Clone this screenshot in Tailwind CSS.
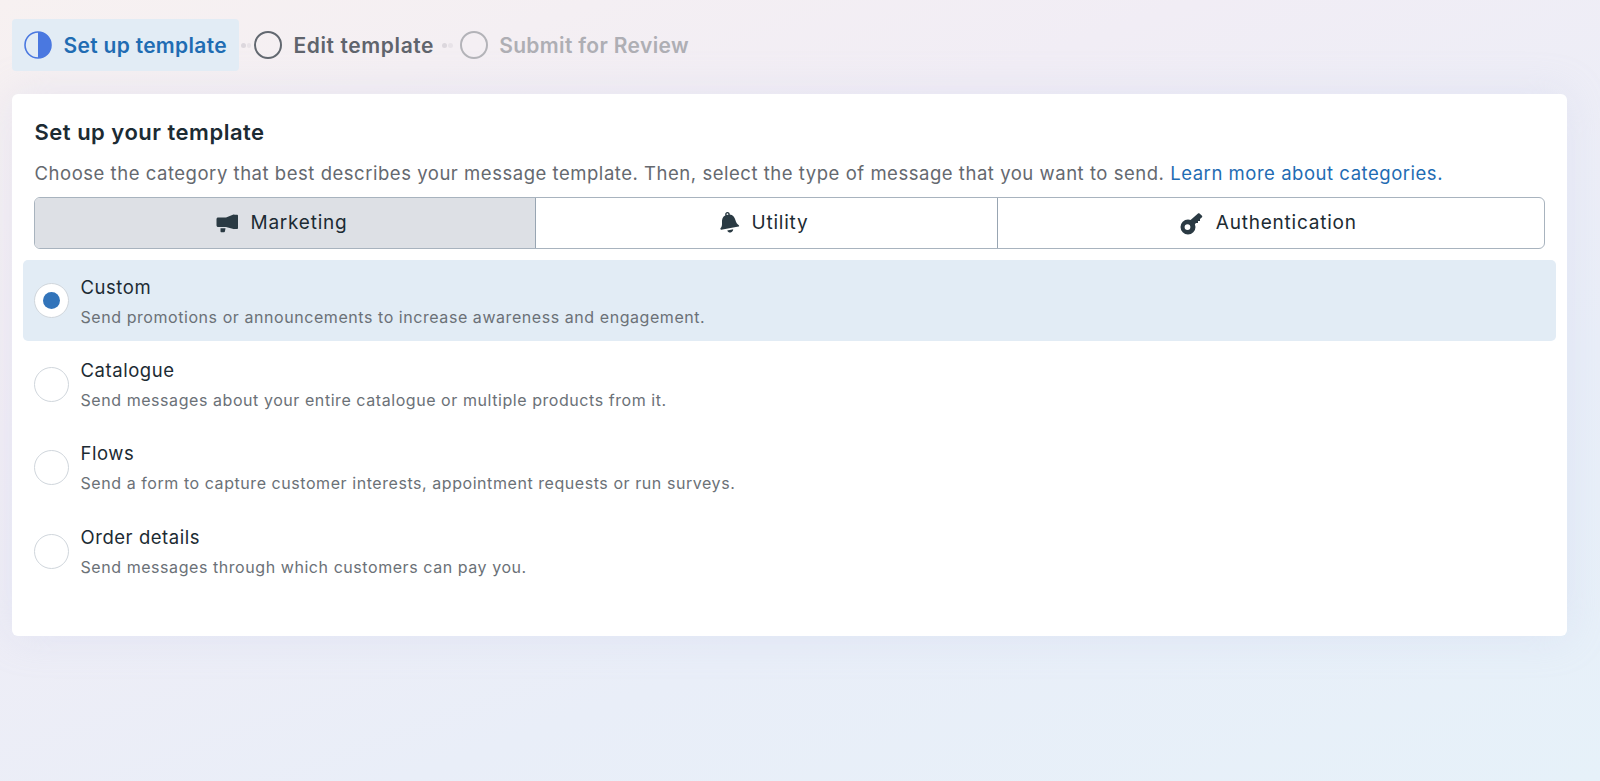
<!DOCTYPE html>
<html lang="en">
<head>
  <meta charset="UTF-8" />
  <meta name="viewport" content="width=device-width, initial-scale=1.0" />
  <title>Set up template</title>
  <script src="https://cdn.jsdelivr.net/npm/@tailwindcss/browser@4"></script>
</head>
<body class="h-[781px] w-[1600px] overflow-hidden bg-[linear-gradient(160deg,#f7f1f1_0%,#f1edf5_32%,#e9eef8_68%,#e6f1f9_100%)] font-['Inter',sans-serif] text-[#1c2b33]">

  <!-- stepper -->
  <div class="flex h-[94px] items-start pl-[11.5px] pt-[19px]">
    <div class="flex h-[52px] w-[227px] items-center gap-[12px] rounded-[4px] bg-[#e2ecf5] pl-[12px]">
      <svg class="h-[28px] w-[28px]" viewBox="0 0 28 28">
        <circle cx="14" cy="14" r="13" fill="none" stroke="#4a78e0" stroke-width="1.6" />
        <path d="M14 1a13 13 0 0 1 0 26z" fill="#4a78e0" />
      </svg>
      <span class="mt-[2px] text-[21px] font-semibold tracking-[0.3px] text-[#1f6cb3]">Set up template</span>
    </div>
    <div class="flex h-[52px] items-center gap-[1px] pl-[2.5px] pr-[2.5px]">
      <span class="h-[5px] w-[5px] rounded-full bg-[#dcd7dd]"></span>
      <span class="h-[5px] w-[4px] rounded-full bg-[#e8e3e8]"></span>
    </div>
    <div class="flex h-[52px] items-center gap-[12px]">
      <span class="h-[28px] w-[28px] rounded-full border-[2.5px] border-[#626870]"></span>
      <span class="mt-[2px] text-[21px] font-semibold tracking-[0.6px] text-[#5f646c]">Edit template</span>
    </div>
    <div class="flex h-[52px] items-center gap-[1px] pl-[8px] pr-[7px]">
      <span class="h-[5px] w-[5px] rounded-full bg-[#dcd7dd]"></span>
      <span class="h-[5px] w-[5px] rounded-full bg-[#e8e3e8]"></span>
    </div>
    <div class="flex h-[52px] items-center gap-[11px]">
      <span class="h-[28px] w-[28px] rounded-full border-[2.5px] border-[#b3b3b8]"></span>
      <span class="mt-[2px] text-[21px] font-semibold tracking-[0.35px] text-[#aeaeb4]">Submit for Review</span>
    </div>
  </div>

  <!-- card -->
  <div class="ml-[11.5px] h-[542px] w-[1555.5px] rounded-[6px] bg-white pl-[11.5px] pr-[11px] pt-[25px] shadow-[0_0_40px_rgba(190,200,235,0.25)]">
    <h1 class="ml-[11.5px] text-[22px] leading-[26px] font-semibold tracking-[0.5px] text-[#1c2b33]">Set up your template</h1>
    <p class="ml-[11.5px] mt-[16px] text-[18.5px] leading-[24px] tracking-[0.53px] text-[#65696f]">Choose the category that best describes your message template. Then, select the type of message that you want to send. <span class="text-[#1f6cb3]">Learn more about categories.</span></p>

    <!-- category tabs -->
    <div class="ml-[11px] mr-[11.5px] mt-[12px] grid h-[52px] grid-cols-[500px_462px_1fr] rounded-[6px] border border-[#a8b3be] text-[19px] tracking-[0.78px] text-[#1c2b33]">
      <div class="flex items-center justify-center gap-[12px] rounded-l-[5px] bg-[#dde0e5] pr-[6px]">
        <svg class="h-[22px] w-[22px]" viewBox="0 -2 22 22" fill="#2a3a43">
          <path d="M.5 5.200c0-1 .7-1.700 1.800-1.700H10L17.500.6c.4-.2.8-.1 1 .1H21c.5 0 1 .4 1 1v12.400c0 .6-.5 1-1 1h-2.500c-.3.2-.7.2-1 0L10 13H2.300c-1.100 0-1.800-.7-1.800-1.800z" />
          <path d="M4.500 14.200h5l-.6 3.300c-.1.5-.4.7-.9.7H5.500c-.6 0-1-.4-1-1z" />
        </svg>
        <span>Marketing</span>
      </div>
      <div class="flex items-center justify-center gap-[12px] border-l border-[#98a5b2] pr-[7px]">
        <svg class="h-[24px] w-[22px]" viewBox="0 0 22 24" fill="#2a3a43">
          <g transform="rotate(-10 11 12)">
            <path fill-rule="evenodd" d="M11 .8a2.300 2.300 0 0 1 2.200 3c3 .9 4.300 3.500 4.600 6.400.3 2.700 1 4.400 2.500 5.600.5.5.2 1.400-.5 1.400H2.200c-.7 0-1-.9-.5-1.400 1.500-1.200 2.200-2.900 2.500-5.600.3-2.900 1.600-5.500 4.600-6.400a2.300 2.300 0 0 1 2.200-3zm0 1.300a1 1 0 0 0-.7 1.600h1.400A1 1 0 0 0 11 2.100z" />
            <path d="M8 19h6c-.3 1.600-1.500 2.600-3 2.600S8.300 20.600 8 19z" />
          </g>
        </svg>
        <span>Utility</span>
      </div>
      <div class="flex items-center justify-center gap-[12px] border-l border-[#98a5b2] pr-[5px]">
        <svg class="h-[24px] w-[24px]" viewBox="0 0 24 24" fill="#2a3a43">
          <path fill-rule="evenodd" d="M8 8.500a7.500 7.500 0 1 1 0 15 7.500 7.500 0 0 1 0-15zm-.5 4.700a2.900 2.900 0 1 0 0 5.800 2.900 2.900 0 0 0 0-5.800z" />
          <path d="M10 9.500 18 2.500c.5-.4 1.100-.4 1.500 0l2.500 2.300c.4.400.4 1 0 1.400l-2 1.800v2h-2v2h-2l-2.500 2.500z" />
        </svg>
        <span>Authentication</span>
      </div>
    </div>

    <!-- message types -->
    <div class="mt-[11px] flex flex-col gap-[2.2px]">
      <div class="flex h-[81px] items-start rounded-[5px] bg-[#e2ecf5] pl-[11px] pt-[15px]">
        <span class="mt-[8px] flex h-[35px] w-[35px] shrink-0 items-center justify-center rounded-full border border-[#d0d6dc] bg-white">
          <span class="h-[17px] w-[17px] rounded-full bg-[#3274ba]"></span>
        </span>
        <div class="ml-[11.5px]">
          <p class="text-[18.5px] leading-[24px] tracking-[0.55px] text-[#1c2b33]">Custom</p>
          <p class="mt-[8px] text-[16px] leading-[20px] tracking-[0.56px] text-[#6b7177]">Send promotions or announcements to increase awareness and engagement.</p>
        </div>
      </div>
      <div class="flex h-[81px] items-start rounded-[5px] pl-[11px] pt-[15px]">
        <span class="mt-[9px] h-[35px] w-[35px] shrink-0 rounded-full border border-[#d0d6dc] bg-white"></span>
        <div class="ml-[11.5px]">
          <p class="text-[18.5px] leading-[24px] tracking-[0.55px] text-[#1c2b33]">Catalogue</p>
          <p class="mt-[8px] text-[16px] leading-[20px] tracking-[0.56px] text-[#6b7177]">Send messages about your entire catalogue or multiple products from it.</p>
        </div>
      </div>
      <div class="flex h-[81px] items-start rounded-[5px] pl-[11px] pt-[15px]">
        <span class="mt-[9px] h-[35px] w-[35px] shrink-0 rounded-full border border-[#d0d6dc] bg-white"></span>
        <div class="ml-[11.5px]">
          <p class="text-[18.5px] leading-[24px] tracking-[0.55px] text-[#1c2b33]">Flows</p>
          <p class="mt-[8px] text-[16px] leading-[20px] tracking-[0.56px] text-[#6b7177]">Send a form to capture customer interests, appointment requests or run surveys.</p>
        </div>
      </div>
      <div class="flex h-[81px] items-start rounded-[5px] pl-[11px] pt-[15px]">
        <span class="mt-[9px] h-[35px] w-[35px] shrink-0 rounded-full border border-[#d0d6dc] bg-white"></span>
        <div class="ml-[11.5px]">
          <p class="text-[18.5px] leading-[24px] tracking-[0.55px] text-[#1c2b33]">Order details</p>
          <p class="mt-[8px] text-[16px] leading-[20px] tracking-[0.56px] text-[#6b7177]">Send messages through which customers can pay you.</p>
        </div>
      </div>
    </div>
  </div>

</body>
</html>
